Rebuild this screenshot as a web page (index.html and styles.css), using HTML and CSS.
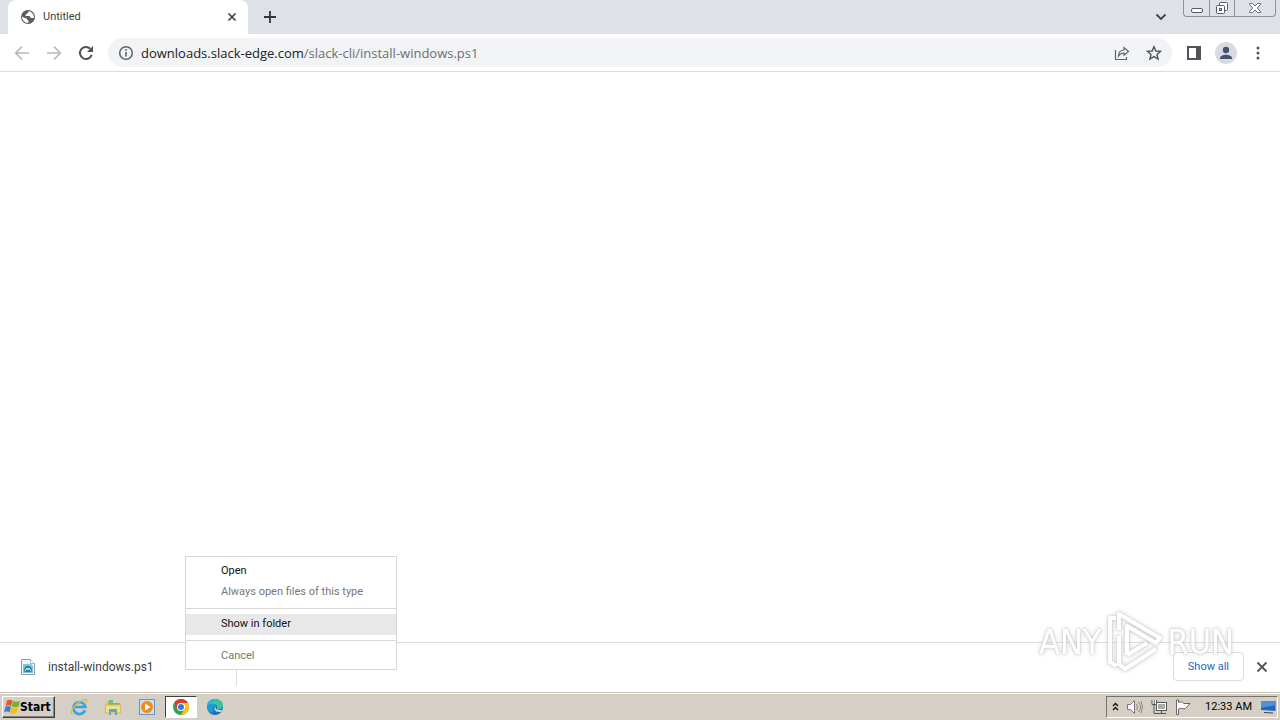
FILE: index.html
```html
<!DOCTYPE html>
<html lang="en">
<head>
<meta charset="utf-8">
<title>Untitled</title>
<link rel="stylesheet" href="styles.css">
</head>
<body>
<header class="tabstrip">
  <div class="tab">
    <svg class="globe" width="16" height="16" viewBox="0 0 16 16"><circle cx="8" cy="8" r="7" fill="#5a5d61"/><path d="M9 2.2C7.500 3 8.500 4 7 4.800S4.800 6 6 7h3c1.500 0 1 2 2.500 2h2.300A6 6 0 0 0 9 2.200zM2 7.500c1.500 1.500 3.500 1.200 4.500 2s.3 1.500 1.500 2 .5 1.500 0 2.400A6 6 0 0 1 2 7.500z" fill="#fff"/></svg>
    <span class="tab-title">Untitled</span>
    <button class="icon-btn tab-close" aria-label="Close tab"><svg width="10" height="10" viewBox="0 0 10 10"><path d="M1.500 1.500l7 7M8.500 1.500l-7 7" stroke="#3c4043" stroke-width="1.700"/></svg></button>
  </div>
  <button class="icon-btn new-tab" aria-label="New tab"><svg width="12" height="12" viewBox="0 0 12 12"><path d="M6 0v12M0 6h12" stroke="#30343b" stroke-width="1.800"/></svg></button>
  <button class="icon-btn tab-search" aria-label="Search tabs"><svg width="12" height="8" viewBox="0 0 12 8"><path d="M1.500 1.500L6 6l4.500-4.500" fill="none" stroke="#3f434a" stroke-width="1.800"/></svg></button>
  <div class="window-controls">
    <button class="win-btn" aria-label="Minimize"><svg width="14" height="16" viewBox="0 0 14 16"><rect x="1.500" y="8.500" width="11" height="4" rx="1.500" fill="#fff" stroke="#555b66"/></svg></button>
    <button class="win-btn" aria-label="Restore"><svg width="14" height="16" viewBox="0 0 14 16"><rect x="4.500" y="2.500" width="8" height="8" rx="1" fill="#fff" stroke="#555b66"/><rect x="1.500" y="5.500" width="8" height="8" rx="1" fill="#fff" stroke="#555b66"/><rect x="4.500" y="8.500" width="2" height="2" fill="#dee1e6" stroke="#555b66"/></svg></button>
    <button class="win-btn win-close" aria-label="Close"><svg width="14" height="16" viewBox="0 0 14 16"><path d="M1.500 3.500h3L7 6l2.500-2.500h3v1L9.300 8l3.200 3.500v1h-3L7 10l-2.500 2.500h-3v-1L4.700 8 1.500 4.500z" fill="#fff" stroke="#666b75"/></svg></button>
  </div>
</header>
<nav class="toolbar">
  <button class="icon-btn nav-btn" aria-label="Back"><svg width="16" height="16" viewBox="0 0 16 16"><path d="M15 8H2M8 1.500L1.700 8 8 14.500" fill="none" stroke="#b7b9bc" stroke-width="1.700"/></svg></button>
  <button class="icon-btn nav-btn" aria-label="Forward"><svg width="16" height="16" viewBox="0 0 16 16"><path d="M1 8h13M8 1.500L14.300 8 8 14.500" fill="none" stroke="#b7b9bc" stroke-width="1.700"/></svg></button>
  <button class="icon-btn nav-btn" aria-label="Reload"><svg width="16" height="16" viewBox="0 0 16 16"><path d="M13.700 9.700A6 6 0 1 1 12.300 3.800" fill="none" stroke="#505358" stroke-width="2"/><path d="M15 1v6H9z" fill="#505358"/></svg></button>
  <div class="omnibox">
    <svg width="16" height="16" viewBox="0 0 16 16"><circle cx="8" cy="8" r="6.300" fill="none" stroke="#5f6368" stroke-width="1.500"/><path d="M8 7v4.500M8 4v1.700" stroke="#5f6368" stroke-width="1.600"/></svg>
    <div class="url" role="textbox" aria-label="Address" contenteditable="true" spellcheck="false"><span class="host">downloads.slack-edge.com</span>/slack-cli/install-windows.ps1</div>
    <button class="icon-btn box-btn" aria-label="Share"><svg width="16" height="16" viewBox="0 0 16 16"><path d="M1.500 5v9.500h11V12M4.500 11c.2-4 2-6 5.500-6V2.500L14.500 6.500 10 10.300V8C7.500 8 6 8.700 4.500 11z" fill="none" stroke="#5f6368" stroke-width="1.200"/></svg></button>
    <button class="icon-btn box-btn" aria-label="Bookmark"><svg width="16" height="16" viewBox="0 0 16 16"><path d="M8 1.700l1.900 4.300 4.700.4-3.600 3.100 1.100 4.600L8 11.600l-4.100 2.500L5 9.500 1.400 6.400 6.100 6z" fill="none" stroke="#505358" stroke-width="1.400"/></svg></button>
  </div>
  <div class="tools">
    <button class="icon-btn" aria-label="Side panel"><svg width="14" height="14" viewBox="0 0 14 14"><path d="M0 0h14v14H0zM2 2v10h7V2z" fill="#505358" fill-rule="evenodd"/></svg></button>
    <button class="icon-btn" aria-label="Profile"><svg width="22" height="22" viewBox="0 0 22 22"><circle cx="11" cy="11" r="11" fill="#d8dce2"/><circle cx="11" cy="8" r="3.200" fill="#46536f"/><path d="M5 16.500c0-5 12-5 12 0v.5H5z" fill="#46536f"/></svg></button>
    <button class="icon-btn more" aria-label="Menu"><svg width="4" height="14" viewBox="0 0 4 14"><g fill="#505358"><circle cx="2" cy="2" r="1.500"/><circle cx="2" cy="7" r="1.500"/><circle cx="2" cy="12" r="1.500"/></g></svg></button>
  </div>
</nav>
<main class="page"></main>
<section class="shelf">
  <div class="download">
    <svg width="14" height="16" viewBox="0 0 14 16"><path d="M.5.500h9l4 4v11H.5z" fill="#f1f6f8" stroke="#8f9da6"/><path d="M9.500.500v4h4" fill="#fff" stroke="#a9b5bc"/><path d="M2 5h8l2 2v7H2z" fill="#7fc4dc"/><path d="M3 12c0-3 1-5 4-5s4 2 4 5l-1 1H4z" fill="#2183ab"/><path d="M4 12l2-3 1 2 1-2 2 3" stroke="#d9f2f8" fill="none"/></svg>
    <span>install-windows.ps1</span>
    <div class="menu" role="menu">
      <button class="menu-item" role="menuitem">Open</button>
      <button class="menu-item" role="menuitem" disabled>Always open files of this type</button>
      <hr class="menu-line">
      <button class="menu-item active" role="menuitem">Show in folder</button>
      <hr class="menu-line">
      <button class="menu-item" role="menuitem" disabled>Cancel</button>
    </div>
  </div>
  <button class="show-all">Show all</button>
  <button class="icon-btn" aria-label="Close downloads"><svg width="12" height="12" viewBox="0 0 12 12"><path d="M1.500 1.500l9 9M10.500 1.500l-9 9" stroke="#505358" stroke-width="1.800"/></svg></button>
  <div class="watermark">
    <span>ANY</span>
    <svg width="58" height="64" viewBox="0 0 58 64"><g fill="none" stroke="#fff" stroke-width="4" stroke-linejoin="round"><path d="M11 8H5v44l7 4M14 20V4l41 24-4 5L22 16v29M14 26v28l6 5 31-20M22 45l20-12"/></g></svg>
    <span>RUN</span>
  </div>
</section>
<footer class="taskbar">
  <button class="start"><svg width="16" height="16" viewBox="0 0 16 16"><path d="M3 1.500q2.500-1.500 5.500 0L7.200 7q-2.500-1.500-5.500 0z" fill="#e8572a"/><path d="M9 2q2.500 1.500 7 0l-1.500 5.500q-3.500 1.500-6.900 0z" fill="#72b52d"/><path d="M1.500 7.700q2.500-1.500 5.500 0l-1.400 5.500q-2.500-1.500-5.500 0z" fill="#3983d3"/><path d="M7.400 8.200q3 1.500 6.800 0L12.700 13.900q-3 1.500-6.700 0z" fill="#f5bb25"/></svg><span>Start</span></button>
  <div class="launchers">
    <button class="launch" aria-label="Internet Explorer"><svg width="18" height="18" viewBox="0 0 18 18"><path d="M15 12.200A6 6 0 1 1 15.300 9H5" fill="none" stroke="#37a5e3" stroke-width="2.700"/><path d="M2.500 16C-.5 15 3 8 9 4s9-3 7 1" fill="none" stroke="#e9b83b" stroke-width="1.500"/></svg></button>
    <button class="launch" aria-label="File Explorer"><svg width="18" height="18" viewBox="0 0 18 18"><path d="M2 3h5l1 2h8v10H2z" fill="#e7c75e"/><path d="M5 2h4v3h7v3H4z" fill="#72bd77"/><path d="M1.500 7h15v8h-15z" fill="#f7df8a" stroke="#d8b95c"/><path d="M5 17v-6h8v6h-2v-3H7v3z" fill="#59a9cf"/></svg></button>
    <button class="launch" aria-label="Media Player"><svg width="18" height="18" viewBox="0 0 18 18"><rect x="1.500" y="1.500" width="15" height="15" fill="#c9e0f2" stroke="#6997c5"/><circle cx="9" cy="9" r="6" fill="#ef8a1d"/><path d="M7 5.500v7l5.500-3.500z" fill="#fff"/></svg></button>
    <button class="launch pressed" aria-label="Chrome"><svg width="16" height="16" viewBox="0 0 16 16"><circle cx="8" cy="8" r="8" fill="#34a04b"/><path d="M1.100 4A8 8 0 0 1 14.900 4H8L4.500 10z" fill="#e33b2e"/><path d="M14.900 4A8 8 0 0 1 8 16l3.500-6L8 4z" fill="#fbc31b"/><circle cx="8" cy="8" r="4" fill="#fff"/><circle cx="8" cy="8" r="3" fill="#3878df"/></svg></button>
    <button class="launch" aria-label="Edge"><svg width="16" height="16" viewBox="0 0 16 16"><circle cx="8" cy="8" r="8" fill="#1672bd"/><path d="M0 7C1-2 15-2 16 6c0 4-4 5-6 3.700C11 7 9 5 6 5 3 5 1 6 0 7z" fill="#39c49b"/><path d="M0 8C0 2 5-1 9 .5 5 3 2 5 0 8z" fill="#2bb5d8"/><path d="M0 8c1-4 9-4 9-1-3 0-4 3-2 6-2 1-4 1-5-.5C1 11 0 10 0 8z" fill="#219bd7"/><path d="M9 6.500c-2 3 1 5 6.200 4.200l-1 2C9 14 5 10.500 9 6.500z" fill="#d6d2c9"/></svg></button>
  </div>
  <div class="tray">
    <svg width="7" height="9" viewBox="0 0 7 9"><path d="M1 4l2.500-2.500L6 4M1 8l2.500-2.500L6 8" fill="none" stroke="#111" stroke-width="1.400"/></svg>
    <svg width="16" height="16" viewBox="0 0 16 16"><path d="M.5 5.500h3l4-4v13l-4-4h-3z" fill="#fff" stroke="#777"/><path d="M9.500 5q2 3 0 6M11.500 3q4 5 0 10M14 2q3 6 0 12" fill="none" stroke="#888"/></svg>
    <svg width="16" height="16" viewBox="0 0 16 16"><rect x="5.500" y="3.500" width="10" height="8" fill="#fff" stroke="#555"/><rect x="7" y="5" width="7" height="5" fill="#aaa"/><path d="M10.500 12v2M7 14.500h8M3 6v8.500h4" fill="none" stroke="#555"/><path d="M1 1v4.500h4.500V1M3.200 1v4" fill="#fff" stroke="#555"/></svg>
    <svg width="16" height="16" viewBox="0 0 16 16"><path d="M1.500 1v14.500h2V10c3-2 4 1 7-.5L15 4.500H9c-2-2-3-2-5.500-1V1z" fill="#fff" stroke="#666"/></svg>
    <time class="clock">12:33 AM</time>
    <svg width="16" height="14" viewBox="0 0 16 14"><path d="M1 1.500L15.500 1v10L1 10z" fill="#2466ba"/><path d="M1 1.500L15.500 1v4L1 8z" fill="#4c91d9"/><path d="M4 12.500l9 .5" stroke="#34465f"/></svg>
  </div>
</footer>
</body>
</html>
```
FILE: styles.css
```css
* { box-sizing: border-box; }
body {
  margin: 0;
  min-height: 100vh;
  display: flex;
  flex-direction: column;
  background: #fff;
  color: #222;
  font: 11px/16px Roboto, sans-serif;
}
button { font: inherit; color: inherit; margin: 0; padding: 0; border: 0; background: none; }
svg { display: block; flex: none; }
.icon-btn { display: flex; align-items: center; justify-content: center; }

.tabstrip { display: flex; height: 34px; padding: 0 4px 0 8px; background: #dee1e6; }
.tab {
  display: flex;
  align-items: center;
  gap: 7px;
  width: 240px;
  padding: 0 11px 0 12px;
  background: #fff;
  border-radius: 8px 8px 0 0;
}
.tab-title { flex: 1; color: #3c4043; }
.new-tab { width: 44px; }
.tab-search { width: 28px; margin-left: auto; }
.window-controls {
  display: flex;
  height: 17px;
  margin-left: 8px;
  border: 1px solid #8d929c;
  border-top: 0;
  border-radius: 0 0 4px 4px;
}
.win-btn { display: flex; justify-content: center; width: 25px; }
.win-btn + .win-btn { border-left: 1px solid #8d929c; }
.win-btn.win-close { width: 41px; }

.toolbar {
  display: flex;
  align-items: center;
  height: 38px;
  padding: 0 6px;
  border-bottom: 1px solid #dadce0;
}
.nav-btn { width: 32px; }
.omnibox {
  display: flex;
  flex: 1;
  align-items: center;
  height: 29px;
  margin-left: 6px;
  padding: 0 2px 0 10px;
  border-radius: 15px;
  background: #f1f3f4;
}
.url { flex: 1; margin-left: 7px; font: 13px/20px "Open Sans", sans-serif; color: #6b7075; }
.host { color: #202124; }
.box-btn { width: 32px; }
.tools { display: flex; align-items: center; gap: 14px; margin: 0 14px 0 15px; }
.more { margin-left: 5px; }

.page { flex: 1; }

.shelf {
  position: relative;
  display: flex;
  align-items: center;
  height: 50px;
  padding: 0 12px 2px 0;
  border-top: 1px solid #dadce0;
}
.download {
  position: relative;
  display: flex;
  align-items: center;
  gap: 13px;
  width: 237px;
  height: 38px;
  padding-left: 21px;
  border-right: 1px solid #dadce0;
  font-size: 12px;
  color: #3c4043;
}
.menu {
  position: absolute;
  left: 185px;
  bottom: 16px;
  width: 212px;
  padding: 4px 0 2px;
  border: 1px solid #d6d6d6;
  background: #fff;
  font-size: 11px;
}
.menu-item { display: block; width: 100%; height: 21px; padding-left: 35px; text-align: left; color: #111; }
.menu-item:disabled { color: #777; }
.menu-item.active { background: #e8e8e8; }
.menu-line { height: 1px; margin: 5px 0; border: 0; background: #d9d9d9; }
.show-all {
  height: 29px;
  margin: 0 12px 0 auto;
  padding: 0 14px;
  border: 1px solid #dadce0;
  border-radius: 4px;
  color: #1967c8;
}
.watermark {
  position: absolute;
  right: 46px;
  bottom: 18px;
  display: flex;
  align-items: center;
  gap: 4px;
  color: #fff;
  font: 34px/48px "DejaVu Sans Condensed", "DejaVu Sans", sans-serif;
  filter: drop-shadow(0 0 1px #bbb) drop-shadow(0 0 2px #ccc);
  opacity: .8;
  pointer-events: none;
}

.taskbar {
  display: flex;
  align-items: center;
  height: 28px;
  padding: 0 2px;
  border-top: 1px solid #c9c5bc;
  background: #d5cfc6;
  box-shadow: inset 0 1px #fff;
}
.start {
  display: flex;
  align-items: center;
  height: 22px;
  padding: 0 3px 0 1px;
  border: 1px solid;
  border-color: #fff #404040 #404040 #fff;
  box-shadow: inset -1px -1px #85827b;
  color: #000;
  font: bold 12px/16px "DejaVu Sans Condensed", "DejaVu Sans", sans-serif;
}
.launchers { display: flex; gap: 2px; margin-left: 8px; }
.launch { display: flex; align-items: center; justify-content: center; width: 32px; height: 22px; }
.launch.pressed {
  border: 1px solid;
  border-color: #404040 #fff #fff #404040;
  background: #fff;
}
.tray {
  display: flex;
  align-items: center;
  gap: 8px;
  height: 22px;
  margin-left: auto;
  padding: 0 1px 0 5px;
  border: 1px solid;
  border-color: #77736c #fff #fff #77736c;
  color: #000;
}
.clock { margin-left: 6px; }
```
